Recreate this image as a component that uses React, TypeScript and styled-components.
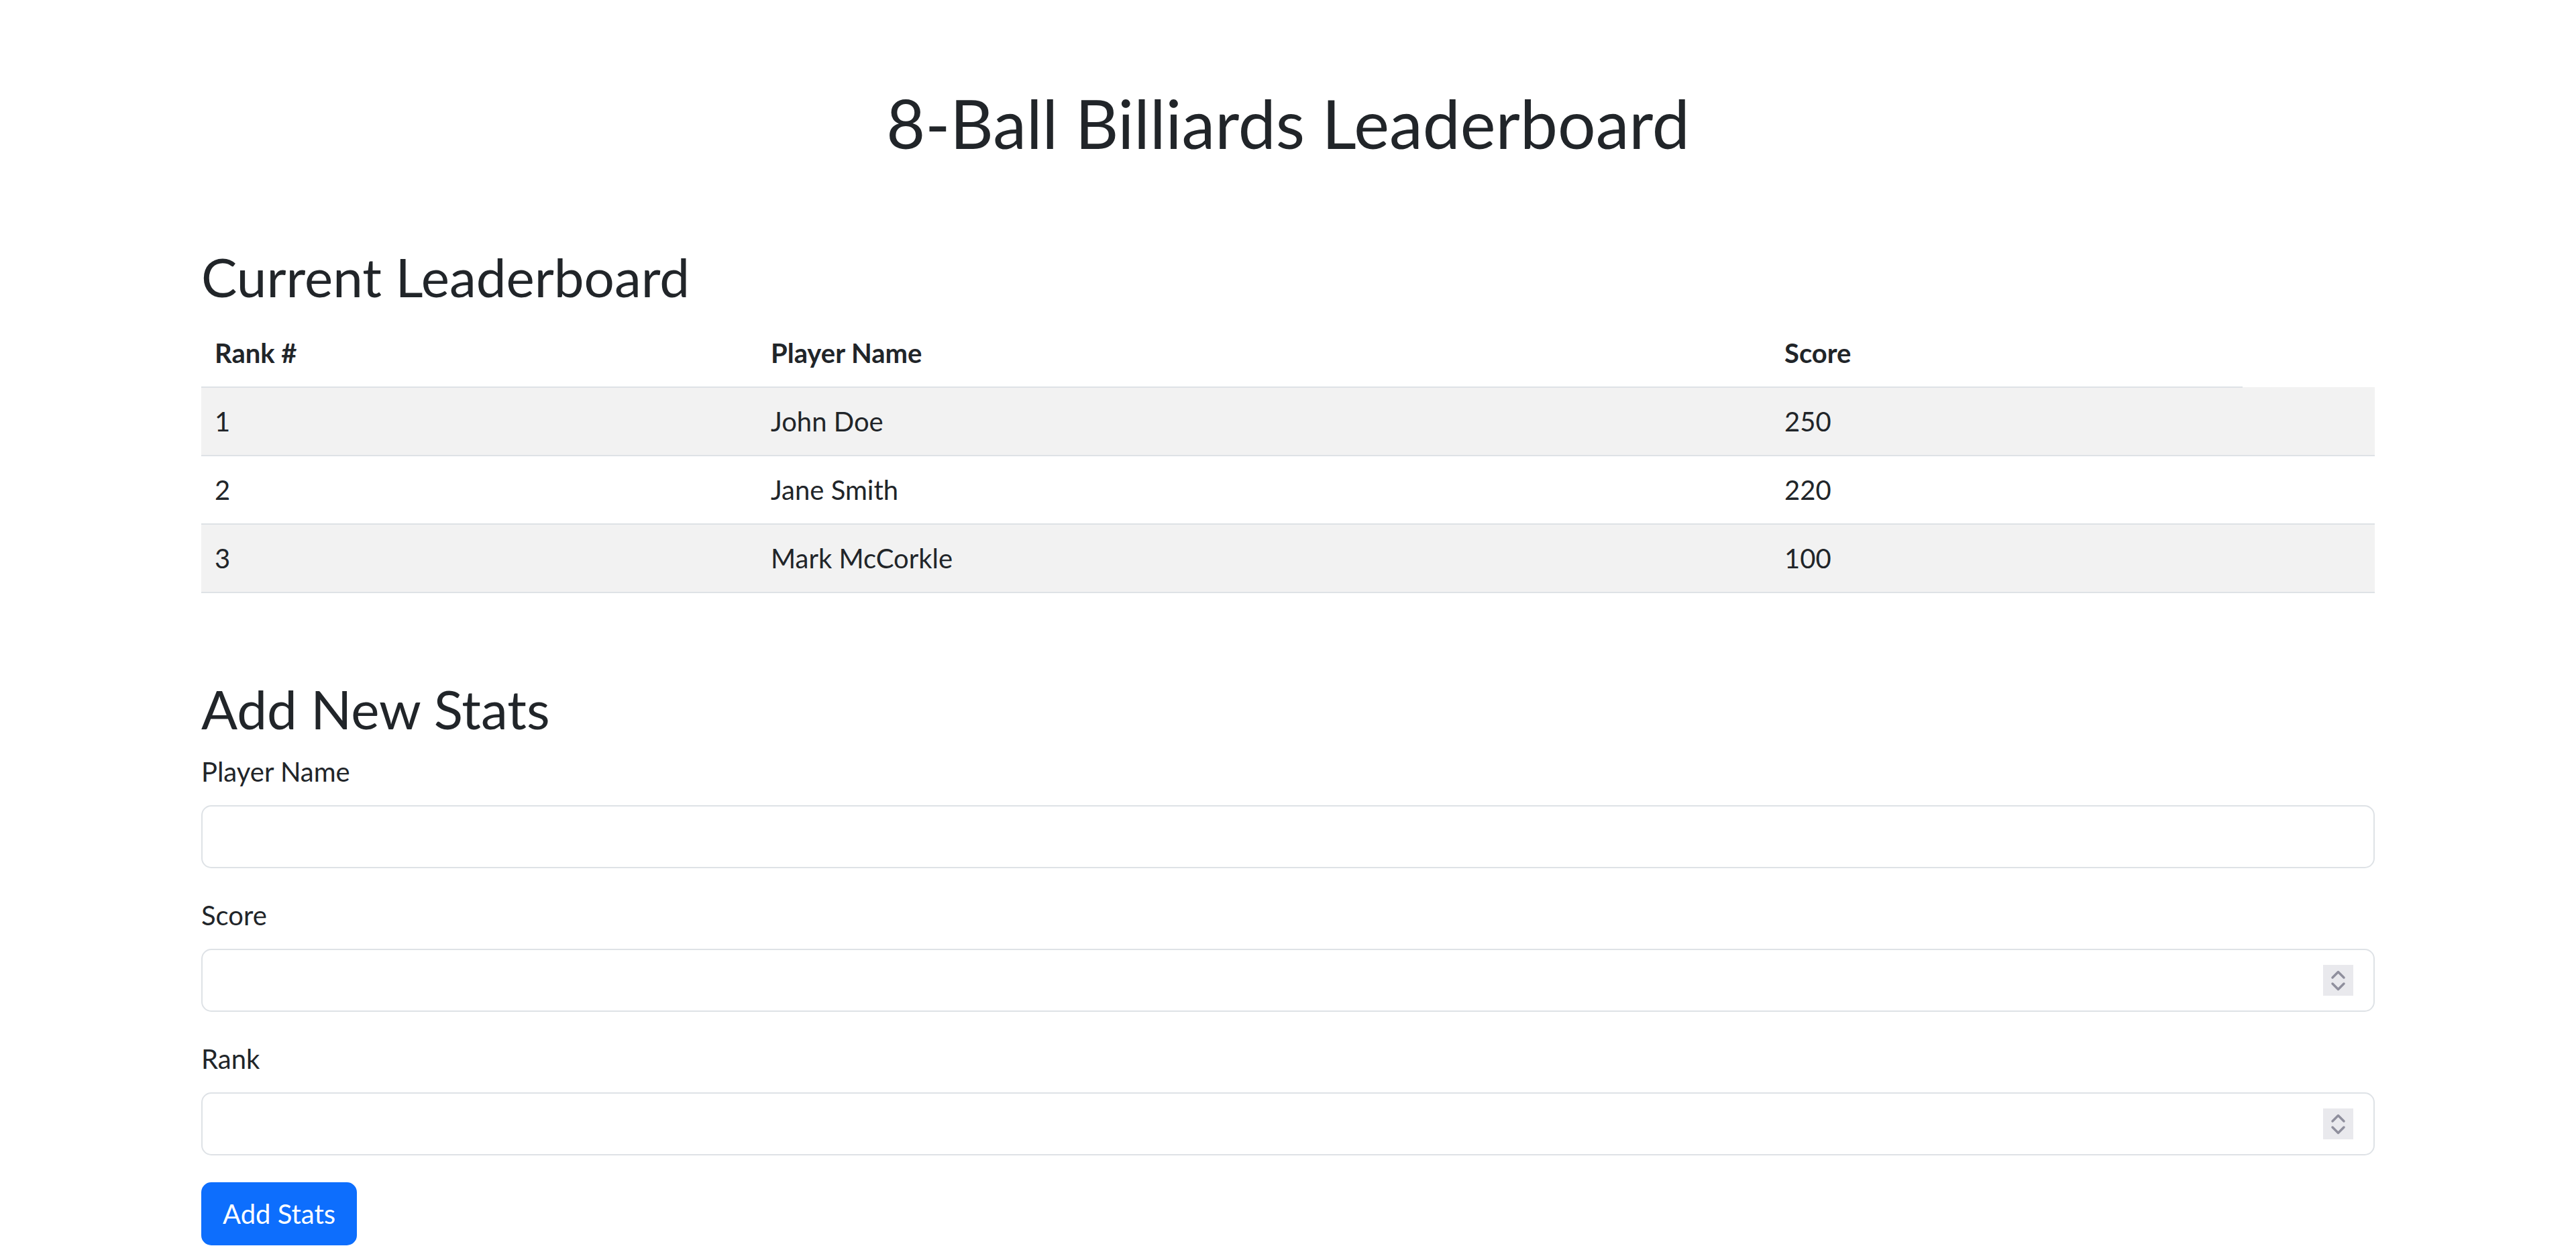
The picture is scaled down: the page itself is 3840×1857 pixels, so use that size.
import React from "react";
import styled, { createGlobalStyle } from "styled-components";

const GlobalStyle = createGlobalStyle`
  *, *::before, *::after { box-sizing: border-box; }
  html, body { margin: 0; padding: 0; background: #ffffff; }
  body {
    font-family: Lato, "Noto Sans", sans-serif;
    font-size: 40px;
    line-height: 1.5;
    color: #212529;
  }
`;

const Container = styled.div`
  max-width: 3300px;
  margin: 0 auto;
  padding: 120px 30px 0;
`;

const Title = styled.h1`
  margin: 0 0 117px;
  padding-top: 3px;
  font-size: 100px;
  font-weight: 400;
  line-height: 1.2;
  text-align: center;
`;

const SectionTitle = styled.h2<{ $spaced?: boolean }>`
  margin: ${(p) => (p.$spaced ? "120px" : "0")} 0 16px;
  padding-top: 4px;
  font-size: 80px;
  font-weight: 400;
  line-height: 1.2;
`;

const Table = styled.table`
  width: 100%;
  border-collapse: collapse;
  table-layout: fixed;
  margin-bottom: 40px;
  color: #212529;
`;

const Col = styled.col<{ $w: number }>`
  width: ${(p) => p.$w}px;
`;

const HeadCell = styled.th`
  padding: 20px;
  text-align: left;
  font-weight: 700;
  border-bottom: 2px solid #dee2e6;
  vertical-align: bottom;
`;

const Row = styled.tr<{ $striped: boolean }>`
  background: ${(p) => (p.$striped ? "#f2f2f2" : "#ffffff")};
`;

const Cell = styled.td`
  padding: 20px;
  border-bottom: 2px solid #dee2e6;
  font-weight: 400;
`;

const Field = styled.div`
  margin-bottom: 40px;
`;

const Label = styled.label`
  display: inline-block;
  margin-bottom: 20px;
`;

const InputWrap = styled.div`
  position: relative;
`;

const Input = styled.input`
  display: block;
  width: 100%;
  height: 94px;
  padding: 15px 30px;
  font-family: inherit;
  font-size: 40px;
  line-height: 1.5;
  color: #212529;
  background: #ffffff;
  border: 2px solid #dee2e6;
  border-radius: 15px;
  outline: none;
  -moz-appearance: textfield;
  &::-webkit-inner-spin-button,
  &::-webkit-outer-spin-button {
    -webkit-appearance: none;
    margin: 0;
  }
`;

const Spinner = styled.svg`
  position: absolute;
  right: 32px;
  top: 50%;
  transform: translateY(-50%);
  pointer-events: none;
`;

const SubmitButton = styled.button`
  display: inline-block;
  height: 94px;
  padding: 15px 30px;
  font-family: inherit;
  font-size: 40px;
  line-height: 1.5;
  color: #ffffff;
  background: #0d6efd;
  border: 2px solid #0d6efd;
  border-radius: 15px;
  cursor: pointer;
`;

const players = [
  { rank: 1, name: "John Doe", score: 250 },
  { rank: 2, name: "Jane Smith", score: 220 },
  { rank: 3, name: "Mark McCorkle", score: 100 },
];

function SpinIcon() {
  return (
    <Spinner width="45" height="46" viewBox="0 0 45 46">
      <rect x="0" y="0" width="45" height="46" fill="#e9e9ed" />
      <path d="M14 19 L22.5 10.5 L31 19" fill="none" stroke="#8f8f9d" strokeWidth="3.5" strokeLinecap="round" strokeLinejoin="round" />
      <path d="M14 28 L22.5 36.5 L31 28" fill="none" stroke="#8f8f9d" strokeWidth="3.5" strokeLinecap="round" strokeLinejoin="round" />
    </Spinner>
  );
}

export default function App() {
  return (
    <>
      <GlobalStyle />
      <Container>
        <Title>8-Ball Billiards Leaderboard</Title>

        <SectionTitle>Current Leaderboard</SectionTitle>
        <Table>
          <colgroup>
            <Col $w={829} />
            <Col $w={1511} />
            <Col $w={703} />
            <Col $w={197} />
          </colgroup>
          <thead>
            <tr>
              <HeadCell>Rank #</HeadCell>
              <HeadCell>Player Name</HeadCell>
              <HeadCell>Score</HeadCell>
            </tr>
          </thead>
          <tbody>
            {players.map((p, i) => (
              <Row key={p.rank} $striped={i % 2 === 0}>
                <Cell>{p.rank}</Cell>
                <Cell>{p.name}</Cell>
                <Cell>{p.score}</Cell>
                <Cell />
              </Row>
            ))}
          </tbody>
        </Table>

        <SectionTitle $spaced>Add New Stats</SectionTitle>
        <form onSubmit={(e) => e.preventDefault()}>
          <Field>
            <Label htmlFor="playerName">Player Name</Label>
            <InputWrap>
              <Input id="playerName" type="text" />
            </InputWrap>
          </Field>
          <Field>
            <Label htmlFor="score">Score</Label>
            <InputWrap>
              <Input id="score" type="number" />
              <SpinIcon />
            </InputWrap>
          </Field>
          <Field>
            <Label htmlFor="rank">Rank</Label>
            <InputWrap>
              <Input id="rank" type="number" />
              <SpinIcon />
            </InputWrap>
          </Field>
          <SubmitButton type="submit">Add Stats</SubmitButton>
        </form>
      </Container>
    </>
  );
}
